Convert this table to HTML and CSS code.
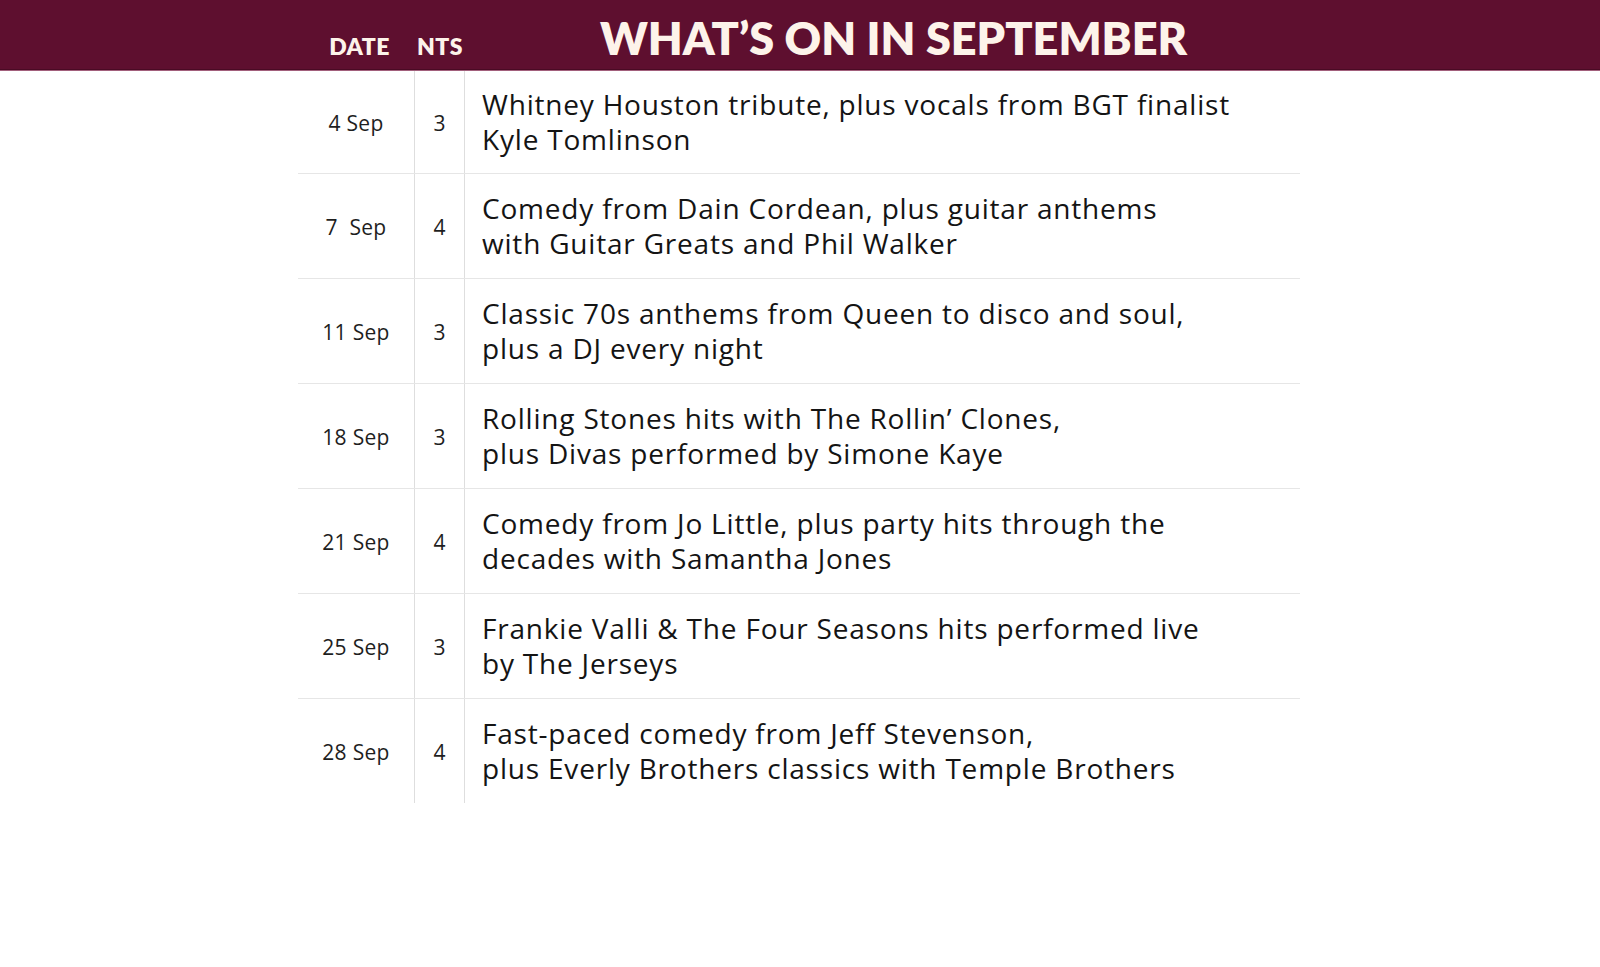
FILE: index.html
```html
<!DOCTYPE html>
<html lang="en">
<head>
<meta charset="utf-8">
<title>What's On in September</title>
<link rel="stylesheet" href="styles.css">
</head>
<body>
<header class="bar">
  <div class="bar-inner">
    <div class="h-date">DATE</div>
    <div class="h-nts">NTS</div>
    <h1 class="title">WHAT’S ON IN SEPTEMBER</h1>
  </div>
</header>
<main class="table">
  <div class="row first">
    <div class="c-date">4 Sep</div>
    <div class="c-nts">3</div>
    <div class="c-desc">Whitney Houston tribute, plus vocals from BGT finalist<br>Kyle Tomlinson</div>
  </div>
  <div class="row">
    <div class="c-date">7&nbsp; Sep</div>
    <div class="c-nts">4</div>
    <div class="c-desc">Comedy from Dain Cordean, plus guitar anthems<br>with Guitar Greats and Phil Walker</div>
  </div>
  <div class="row">
    <div class="c-date">11 Sep</div>
    <div class="c-nts">3</div>
    <div class="c-desc">Classic 70s anthems from Queen to disco and soul,<br>plus a DJ every night</div>
  </div>
  <div class="row">
    <div class="c-date">18 Sep</div>
    <div class="c-nts">3</div>
    <div class="c-desc">Rolling Stones hits with The Rollin’ Clones,<br>plus Divas performed by Simone Kaye</div>
  </div>
  <div class="row">
    <div class="c-date">21 Sep</div>
    <div class="c-nts">4</div>
    <div class="c-desc">Comedy from Jo Little, plus party hits through the<br>decades with Samantha Jones</div>
  </div>
  <div class="row">
    <div class="c-date">25 Sep</div>
    <div class="c-nts">3</div>
    <div class="c-desc">Frankie Valli &amp; The Four Seasons hits performed live<br>by The Jerseys</div>
  </div>
  <div class="row last">
    <div class="c-date">28 Sep</div>
    <div class="c-nts">4</div>
    <div class="c-desc">Fast-paced comedy from Jeff Stevenson,<br>plus Everly Brothers classics with Temple Brothers</div>
  </div>
</main>
</body>
</html>
```

FILE: styles.css
```css
html, body {
  margin: 0;
  padding: 0;
  background: #ffffff;
}
body {
  font-family: "Open Sans", Lato, "Liberation Sans", sans-serif;
  color: #141414;
}
.bar {
  background: #5e0f2f;
  height: 69px;
  border-bottom: 1px solid #4a0a24;
  box-shadow: 0 1px 0 #a2607c;
  position: relative;
  z-index: 1;
}
.bar-inner {
  margin-left: 298px;
  width: 1002px;
  height: 69px;
  display: grid;
  grid-template-columns: 117px 50px 1fr;
  align-items: end;
  color: #fdf3ea;
  font-family: Lato, "Open Sans", sans-serif;
  font-weight: 700;
}
.h-date, .h-nts {
  font-size: 23px;
  font-weight: 800;
  text-align: center;
  padding-bottom: 11px;
  line-height: 1;
  letter-spacing: 0.4px;
}
.h-date { padding-left: 6px; }
.title {
  margin: 0;
  font-size: 45px;
  font-weight: 800;
  text-align: center;
  padding-left: 22px;
  padding-bottom: 8px;
  line-height: 1;
}
.table {
  margin-left: 298px;
  width: 1002px;
  margin-top: 1px;
}
.row {
  display: grid;
  grid-template-columns: 117px 50px 1fr;
  height: 105px;
  border-bottom: 1px solid #e6e6e6;
  box-sizing: border-box;
}
.row.first { height: 103px; }
.row.last { border-bottom: none; height: 104px; }
.c-date, .c-nts, .c-desc {
  display: flex;
  align-items: center;
}
.c-date {
  justify-content: center;
  font-size: 21px;
  letter-spacing: 0.3px;
  color: #1e1e1e;
  border-right: 1px solid #dedede;
  padding-top: 2px;
}
.c-nts {
  justify-content: center;
  font-size: 21px;
  color: #1e1e1e;
  border-right: 1px solid #dedede;
  padding-top: 2px;
}
.c-desc {
  padding-left: 17px;
  font-size: 28px;
  letter-spacing: 0.8px;
  line-height: 35px;
  padding-top: 0;
}
```
